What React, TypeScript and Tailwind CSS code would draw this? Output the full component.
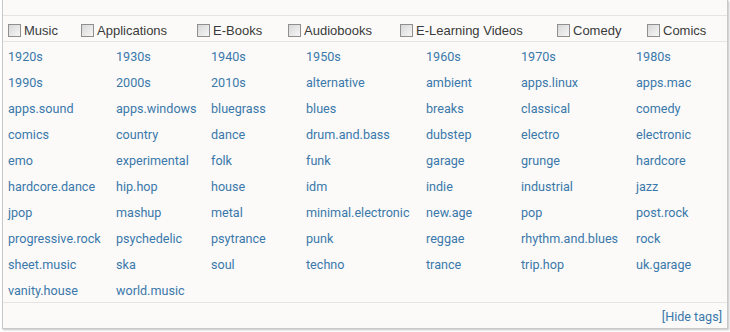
import React from "react";

const tags = [
  "1920s","1930s","1940s","1950s","1960s","1970s","1980s",
  "1990s","2000s","2010s","alternative","ambient","apps.linux","apps.mac",
  "apps.sound","apps.windows","bluegrass","blues","breaks","classical","comedy",
  "comics","country","dance","drum.and.bass","dubstep","electro","electronic",
  "emo","experimental","folk","funk","garage","grunge","hardcore",
  "hardcore.dance","hip.hop","house","idm","indie","industrial","jazz",
  "jpop","mashup","metal","minimal.electronic","new.age","pop","post.rock",
  "progressive.rock","psychedelic","psytrance","punk","reggae","rhythm.and.blues","rock",
  "sheet.music","ska","soul","techno","trance","trip.hop","uk.garage",
  "vanity.house","world.music",
];

const cats: [string, string][] = [
  ["Music", "w-[73px]"],
  ["Applications", "w-[116px]"],
  ["E-Books", "w-[91px]"],
  ["Audiobooks", "w-[112px]"],
  ["E-Learning Videos", "w-[157px]"],
  ["Comedy", "w-[90px]"],
  ["Comics", "w-[70px]"],
];

function Box() {
  return (
    <span className="inline-block w-[13px] h-[13px] border border-[#8f8f8f] bg-gradient-to-br from-[#d8d8d8] to-[#f6f6f6] shrink-0" />
  );
}

export default function App() {
  return (
    <div className="w-[730px] h-[332px] bg-white relative overflow-hidden">
      <div className="ml-[2px] w-[726px] h-[329px] border-l border-r border-b border-[#c9c9c9] bg-[#fbfaf9] shadow-[1px_1px_2px_rgba(0,0,0,0.25)] flex flex-col">
        <div className="h-[16px] border-b border-[#e6e4e2]" />
        <div className="h-[26px] flex items-center pl-[5px] pt-[4px] border-b border-[#e6e4e2] text-[13px] text-[#3a3a3a] [font-family:'Liberation_Sans',Arial,sans-serif]">
          {cats.map(([c, w]) => (
            <div key={c} className={`${w} flex items-center gap-[3px] shrink-0`}>
              <Box />
              <span>{c}</span>
            </div>
          ))}
        </div>
        <div className="grid grid-cols-[108px_95px_95px_120px_95px_115px_1fr] pl-[5px] border-b border-[#e6e4e2] text-[12.6px] text-[#3a78aa] [font-family:Roboto,'Liberation_Sans',sans-serif]">
          {tags.map((t) => (
            <div key={t} className="h-[26px] pt-[4px] flex items-center whitespace-nowrap">
              {t}
            </div>
          ))}
        </div>
        <div className="flex-1 flex items-center justify-end pr-[5px] pt-[3px] text-[12.6px] text-[#3a78aa] [font-family:Roboto,'Liberation_Sans',sans-serif]">
          [Hide tags]
        </div>
      </div>
    </div>
  );
}
